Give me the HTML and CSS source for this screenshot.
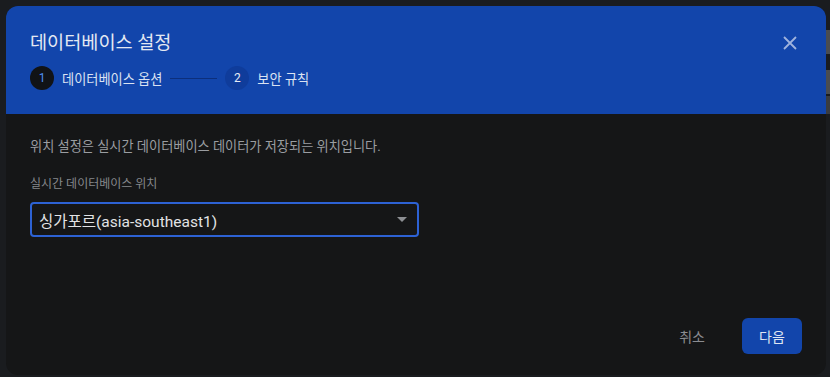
FILE: index.html
```html
<!DOCTYPE html>
<html lang="ko">
<head>
    <meta charset="UTF-8">
    <meta name="viewport" content="width=device-width, initial-scale=1.0">
    <title>데이터베이스 설정</title>
    <link rel="stylesheet" href="styles.css">
</head>
<body>
    <!-- background app, mostly hidden -->
    <div class="backdrop">
        <div class="stripe s1"></div>
        <div class="stripe s2"></div>
        <div class="stripe s3"></div>
    </div>

    <div class="dialog">
        <div class="dialog-header">
            <div class="title-row">
                <h1>데이터베이스 설정</h1>
                <button class="close-btn" aria-label="닫기">
                    <svg width="14" height="14" viewBox="0 0 14 14">
                        <path d="M1 1 L13 13 M13 1 L1 13" stroke="#9fb3dd" stroke-width="1.8" fill="none"/>
                    </svg>
                </button>
            </div>
            <div class="stepper">
                <div class="step active">
                    <span class="step-num">1</span>
                    <span class="step-label">데이터베이스 옵션</span>
                </div>
                <div class="step-line"></div>
                <div class="step">
                    <span class="step-num">2</span>
                    <span class="step-label">보안 규칙</span>
                </div>
            </div>
        </div>

        <div class="dialog-body">
            <p class="desc">위치 설정은 실시간 데이터베이스 데이터가 저장되는 위치입니다.</p>
            <label class="field-label">실시간 데이터베이스 위치</label>
            <div class="select">
                <span>싱가포르(asia-southeast1)</span>
                <span class="arrow"></span>
            </div>
        </div>

        <div class="dialog-footer">
            <button class="btn-text">취소</button>
            <button class="btn-primary">다음</button>
        </div>
    </div>
</body>
</html>
```

FILE: styles.css
```css
* {
    margin: 0;
    padding: 0;
    box-sizing: border-box;
    font-family: Roboto, "Noto Sans CJK KR", sans-serif;
}

body {
    width: 830px;
    height: 377px;
    background-color: #1a1c1f;
    padding: 6px 4px 2px 6px;
    position: relative;
    overflow: hidden;
}

/* background page peeking out on the right */
.backdrop {
    position: absolute;
    top: 0;
    right: 0;
    width: 8px;
    height: 100%;
}

.stripe {
    position: absolute;
    right: 0;
    width: 4px;
    background-color: #4a4c50;
}

.s1 { top: 30px; height: 24px; }
.s2 { top: 70px; height: 24px; }
.s3 { top: 96px; height: 18px; background-color: #3a3c40; }

.dialog {
    width: 820px;
    height: 369px;
    background-color: #151617;
    border-radius: 12px;
    overflow: hidden;
    display: flex;
    flex-direction: column;
}

.dialog-header {
    background-color: #1245ab;
    height: 108px;
    padding: 24px 24px 0 24px;
}

.title-row {
    display: flex;
    justify-content: space-between;
    align-items: center;
}

.title-row h1 {
    font-size: 18.6px;
    font-weight: 400;
    color: #e3e8f2;
    line-height: 26px;
}

.close-btn {
    background: none;
    border: none;
    width: 24px;
    height: 24px;
    display: flex;
    align-items: center;
    justify-content: center;
}

.stepper {
    display: flex;
    align-items: center;
    margin-top: 10px;
}

.step {
    display: flex;
    align-items: center;
    gap: 8px;
}

.step-num {
    width: 24px;
    height: 24px;
    border-radius: 50%;
    background-color: #0f3c9b;
    color: #e6ebf5;
    font-size: 12px;
    display: flex;
    align-items: center;
    justify-content: center;
}

.step.active .step-num {
    background-color: #111316;
    color: #4d8ef2;
}

.step-label {
    font-size: 13.2px;
    color: #dbe3f2;
}

.step-line {
    width: 47px;
    height: 1px;
    background-color: #0c2f7c;
    margin: 0 8px;
}

.dialog-body {
    padding: 24px 24px 0 24px;
    flex: 1;
}

.desc {
    font-size: 13.2px;
    color: #9a9da1;
    line-height: 18px;
}

.field-label {
    display: block;
    font-size: 12px;
    color: #85888c;
    margin-top: 18px;
}

.select {
    margin-top: 11px;
    width: 389px;
    height: 35px;
    border: 2px solid #2d62d4;
    border-radius: 4px;
    display: flex;
    align-items: center;
    justify-content: space-between;
    padding: 0 10px 0 7px;
    font-size: 15.5px;
    color: #e2e3e5;
}

.arrow {
    width: 0;
    height: 0;
    border-left: 5px solid transparent;
    border-right: 5px solid transparent;
    border-top: 5px solid #8d8f93;
}

.dialog-footer {
    display: flex;
    justify-content: flex-end;
    align-items: center;
    gap: 23px;
    padding: 0 24px 21px 0;
}

.btn-text {
    background: none;
    border: none;
    font-size: 14px;
    color: #8a8c90;
    padding: 0 14px;
    height: 36px;
}

.btn-primary {
    background-color: #1245ab;
    border: none;
    border-radius: 6px;
    color: #dfe6f3;
    font-size: 14px;
    width: 60px;
    height: 36px;
}
```
